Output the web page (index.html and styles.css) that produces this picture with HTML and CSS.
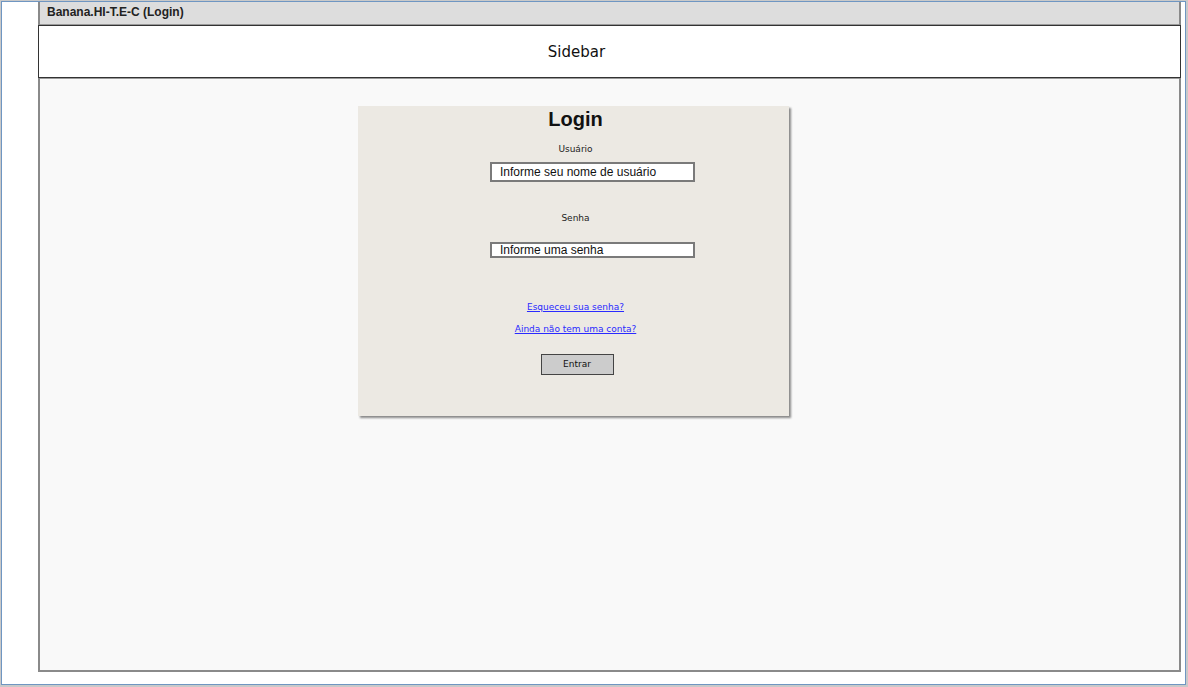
FILE: index.html
```html
<!DOCTYPE html>
<html lang="pt">
<head>
<meta charset="utf-8">
<title>Banana.HI-T.E-C (Login)</title>
<link rel="stylesheet" href="styles.css">
</head>
<body>
<div class="window">
  <div class="frame">
    <div class="titlebar">Banana.HI-T.E-C (Login)</div>
    <div class="sidebar">Sidebar</div>
    <div class="content">
      <div class="card">
        <h1 class="card-title">Login</h1>
        <div class="label label-user">Usuário</div>
        <div class="input input-user">Informe seu nome de usuário</div>
        <div class="label label-pass">Senha</div>
        <div class="input input-pass">Informe uma senha</div>
        <a class="link link-forgot" href="#">Esqueceu sua senha?</a>
        <a class="link link-signup" href="#">Ainda não tem uma conta?</a>
        <div class="button">Entrar</div>
      </div>
    </div>
  </div>
</div>
</body>
</html>
```
FILE: styles.css
```css
html, body {
  margin: 0;
  padding: 0;
}
body {
  width: 1188px;
  height: 687px;
  background: #c9c9c9;
  padding: 1px 0 0 1px;
  box-sizing: border-box;
  overflow: hidden;
}
.window {
  width: 1185px;
  height: 684px;
  box-sizing: border-box;
  border: 1px solid #6f96c2;
  background: #ffffff;
  padding: 0 4px 0 36px;
  display: flex;
}
.frame {
  flex: 1;
  height: 670px;
  display: flex;
  flex-direction: column;
  border-left: 2px solid #8a8a8a;
  border-right: 2px solid #8a8a8a;
  border-bottom: 2px solid #8a8a8a;
  box-sizing: border-box;
}
.titlebar {
  height: 22px;
  background: #dddddd;
  border-bottom: 1px solid #9a9a9a;
  font-family: "Liberation Sans", Arial, sans-serif;
  font-weight: bold;
  font-size: 12px;
  color: #222;
  line-height: 21px;
  padding-left: 7px;
}
.sidebar {
  height: 53px;
  box-sizing: border-box;
  background: #ffffff;
  border: 1px solid #333;
  margin: 0 -2px 0 -2px;
  font-family: "DejaVu Sans", sans-serif;
  font-size: 15px;
  color: #111;
  display: flex;
  align-items: center;
  justify-content: center;
  padding-right: 66px;
  padding-top: 1px;
}
.content {
  flex: 1;
  background: #f9f9f9;
  border-top: 1px solid #9a9a9a;
  padding: 27px 0 0 318px;
}
.card {
  width: 431px;
  height: 310px;
  box-sizing: border-box;
  background: #ece9e3;
  box-shadow: 2px 2px 2px rgba(0, 0, 0, 0.45);
  display: flex;
  flex-direction: column;
  align-items: center;
  padding-top: 1px;
  padding-left: 4px;
}
.card-title {
  margin: 0;
  font-family: "Liberation Sans", Arial, sans-serif;
  font-weight: bold;
  font-size: 20px;
  line-height: 24px;
  color: #111;
}
.label {
  font-family: "DejaVu Sans", sans-serif;
  font-size: 9px;
  line-height: 14px;
  color: #222;
}
.label-user { margin-top: 11px; }
.label-pass { margin-top: 29px; }
.input {
  align-self: flex-start;
  margin-left: 128px;
  width: 205px;
  box-sizing: border-box;
  background: #fff;
  border: 2px solid #7a7a7a;
  font-family: "Liberation Sans", Arial, sans-serif;
  font-size: 12px;
  color: #111;
  padding-left: 8px;
  white-space: nowrap;
}
.input-user {
  height: 20px;
  line-height: 17px;
  margin-top: 6px;
}
.input-pass {
  height: 16px;
  line-height: 12px;
  margin-top: 17px;
}
.link {
  font-family: "DejaVu Sans", sans-serif;
  font-size: 9px;
  line-height: 14px;
  color: #2a2aff;
  text-decoration: underline;
}
.link-forgot { margin-top: 42px; }
.link-signup { margin-top: 8px; }
.button {
  margin-top: 18px;
  margin-left: 3px;
  width: 73px;
  height: 21px;
  box-sizing: border-box;
  background: #cccccc;
  border: 1px solid #444;
  font-family: "DejaVu Sans", sans-serif;
  font-size: 9px;
  line-height: 19px;
  text-align: center;
  color: #111;
}
```
